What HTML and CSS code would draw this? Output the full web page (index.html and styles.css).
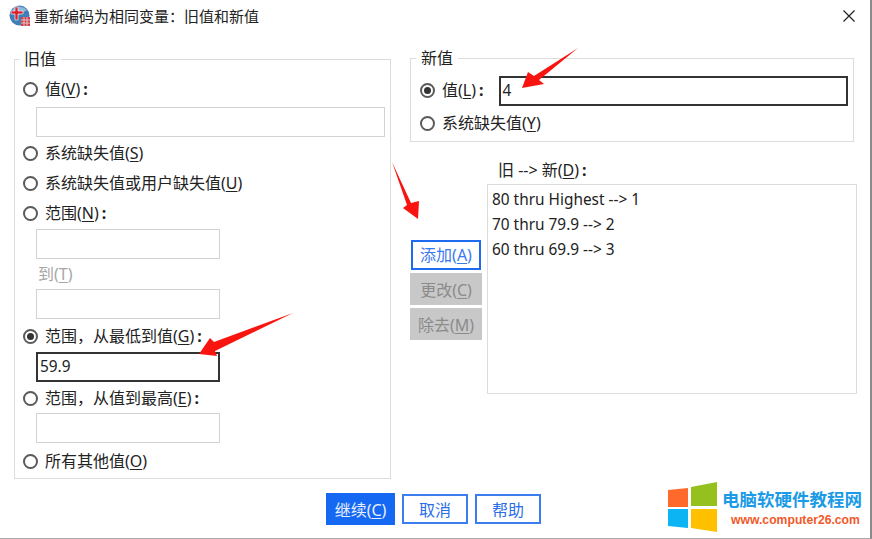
FILE: index.html
```html
<!DOCTYPE html>
<html lang="zh">
<head>
<meta charset="utf-8">
<title>重新编码为相同变量：旧值和新值</title>
<link rel="stylesheet" href="styles.css">
</head>
<body>
<div class="dialog">
  <header class="titlebar">
    <svg class="app-icon" width="22" height="22" viewBox="0 0 22 22">
      <circle cx="10.5" cy="10.5" r="10" fill="#3f7fb8"/>
      <path d="M4 4 A10 10 0 0 1 18 5 L10 10 L3 9 Z" fill="#8fb8d8"/>
      <path d="M6 2h3v4h5v3H9v6H6V9H2V6h4z" fill="#d9232e" stroke="#fff" stroke-width=".6"/>
      <rect x="12" y="12" width="9" height="9" fill="#c8434c"/>
      <path d="M12 15h9M12 18h9M15 12v9M18 12v9" stroke="#f3d7d9" stroke-width=".8"/>
    </svg>
    <span class="title">重新编码为相同变量：旧值和新值</span>
    <svg class="close" width="14" height="14" viewBox="0 0 14 14"><path d="M1.5 1.5l11 11M12.5 1.5l-11 11" stroke="#222" stroke-width="1.2" fill="none"/></svg>
  </header>

  <main class="content">
    <fieldset class="group old">
      <legend>旧值</legend>
      <div class="opt"><i class="radio"></i><span>值(<u>V</u>)<b class="c">:</b></span></div>
      <div class="field wide"></div>
      <div class="opt opt-a"><i class="radio"></i><span>系统缺失值(<u>S</u>)</span></div>
      <div class="opt opt-b"><i class="radio"></i><span>系统缺失值或用户缺失值(<u>U</u>)</span></div>
      <div class="opt opt-b"><i class="radio"></i><span>范围(<u>N</u>)<b class="c">:</b></span></div>
      <div class="field narrow"></div>
      <div class="to">到(<u>T</u>)</div>
      <div class="field narrow after-to"></div>
      <div class="opt opt-c"><i class="radio on"></i><span>范围，从最低到值(<u>G</u>)<b class="c">:</b></span></div>
      <div class="field narrow active">59.9</div>
      <div class="opt opt-d"><i class="radio"></i><span>范围，从值到最高(<u>E</u>)<b class="c">:</b></span></div>
      <div class="field narrow tight"></div>
      <div class="opt opt-e"><i class="radio"></i><span>所有其他值(<u>O</u>)</span></div>
    </fieldset>

    <div class="right">
      <fieldset class="group new">
        <legend>新值</legend>
        <div class="new-row">
          <div class="opt opt-l"><i class="radio on"></i><span>值(<u>L</u>)<b class="c">:</b></span></div>
          <div class="field grow active">4</div>
        </div>
        <div class="opt opt-y"><i class="radio"></i><span>系统缺失值(<u>Y</u>)</span></div>
      </fieldset>
      <div class="mapping">
        <div class="actions">
          <button class="btn add">添加(<u>A</u>)</button>
          <button class="btn off">更改(<u>C</u>)</button>
          <button class="btn off">除去(<u>M</u>)</button>
        </div>
        <div class="list-wrap">
          <div class="list-label">旧 --&gt; 新(<u>D</u>)<b class="c">:</b></div>
          <div class="list">
            <div>80 thru Highest --&gt; 1</div>
            <div>70 thru 79.9 --&gt; 2</div>
            <div>60 thru 69.9 --&gt; 3</div>
          </div>
        </div>
      </div>
    </div>
  </main>

  <footer class="footer">
    <button class="btn primary">继续(<u>C</u>)</button>
    <button class="btn plain">取消</button>
    <button class="btn plain">帮助</button>
  </footer>

  <svg class="arrows" width="872" height="539" viewBox="0 0 872 539">
    <polygon fill="#f8150f" points="522,88 528,72 534,76 578,48 539,80 544,84"/>
    <polygon fill="#f8150f" points="392,162 411,203 419,201 418,219 403,208 407,205"/>
    <polygon fill="#f8150f" points="293,313 214,342 210,338 199,354 217,356 215,351"/>
  </svg>

  <div class="watermark">
    <svg class="win" width="50" height="51" viewBox="0 0 50 51">
      <polygon fill="#ff6a2c" points="0,8 20,6 20,25 0,25"/>
      <polygon fill="#95c11f" points="23,5 49,0 49,24 23,24"/>
      <polygon fill="#0db4f3" points="0,27 20,27 20,46 0,44"/>
      <polygon fill="#ffc000" points="23,27 49,27 49,50 23,46"/>
    </svg>
    <div class="wm-text">
      <div class="wm-cn">电脑软硬件教程网</div>
      <div class="wm-url">www.computer26.com</div>
    </div>
  </div>
</div>
</body>
</html>
```
FILE: styles.css
```css
* { box-sizing: border-box; }
html, body { margin: 0; padding: 0; background: #fff; }
body {
  font-family: "Noto Sans", "Noto Sans CJK SC", sans-serif;
  font-size: 16px;
  color: #222;
  width: 872px;
  height: 539px;
  overflow: hidden;
}
u { text-underline-offset: 2px; }
.c { font-weight: 700; margin-left: 3px; }

.dialog {
  position: relative;
  width: 872px;
  height: 539px;
  display: flex;
  flex-direction: column;
  border-right: 2px solid #8a8a8a;
  border-bottom: 1px solid #a8a8a8;
}

.titlebar {
  height: 32px;
  padding: 0 15px 0 9px;
  display: flex;
  align-items: center;
  flex: none;
}
.app-icon { flex: none; margin-right: 3px; }
.title { font-size: 15px; line-height: 20px; color: #222; font-family: "Noto Sans CJK SC", sans-serif; }
.close { margin-left: auto; margin-right: -1px; }

.content {
  display: flex;
  padding: 17px 0 0 14px;
  flex: none;
  height: 448px;
}

.group {
  margin: 0;
  padding: 0;
  min-width: 0;
  border: 1px solid #dcdcdc;
}
.group legend {
  margin-left: -4px;
  padding: 0 5px;
  font-size: 16px;
  line-height: 20px;
  height: 20px;
}
.old { width: 377px; height: 430px; padding: 0 0 0 8px; }
.old > .opt:first-of-type { margin-top: 9px; }
.new { width: 444px; height: 94px; padding: 0 0 0 9px; }

.right { margin-top: -1px; margin-left: 19px; width: 447px; display: flex; flex-direction: column; }

.opt { display: flex; align-items: center; height: 22px; line-height: 22px; white-space: nowrap; }
.opt span { margin-left: 7px; }
.opt-a { margin-top: 5px; }
.opt-b { margin-top: 8px; }
.opt-c { margin-top: 6px; }
.opt-d { margin-top: 5px; }
.opt-e { margin-top: 7px; }
.opt-l { margin-bottom: 2px; }
.opt-y { margin-top: 6px; }

.radio {
  flex: none;
  width: 15px;
  height: 15px;
  border: 2px solid #5a5a5a;
  border-radius: 50%;
  display: flex;
  align-items: center;
  justify-content: center;
  background: #fff;
}
.radio.on::before {
  content: "";
  width: 7px;
  height: 7px;
  border-radius: 50%;
  background: #333;
}

.field {
  height: 30px;
  border: 1px solid #d2d2d2;
  background: #fff;
  line-height: 28px;
  padding-left: 2px;
  font-size: 15.4px;
}
.field.wide { width: 349px; margin: 7px 0 0 13px; }
.field.narrow { width: 184px; margin: 5px 0 0 13px; }
.field.after-to { margin-top: 4px; }
.field.tight { margin-top: 4px; }
.field.active { border: 2px solid #333; line-height: 26px; padding-left: 2px; }
.field.grow { width: 349px; margin: 0 0 0 15px; }
.new-row { display: flex; align-items: center; margin-top: 8px; }

.to { margin: 4px 0 0 15px; height: 22px; line-height: 22px; color: #a6a6a6; font-size: 16px; }

.mapping { display: flex; align-items: flex-start; margin-top: 16px; }
.actions { width: 77px; flex: none; margin-top: 82px; display: flex; flex-direction: column; align-items: flex-start; }
.list-wrap { width: 370px; }
.list-label { margin-left: 11px; height: 26px; line-height: 24px; font-size: 16px; }
.list {
  height: 210px;
  border: 1px solid #dcdcdc;
  padding: 2px 0 0 4px;
  font-size: 15.4px;
  line-height: 25px;
}

.btn {
  display: block;
  font-family: inherit;
  font-size: 16px;
  padding: 0;
  margin: 0;
  text-align: center;
  border-radius: 0;
  background: #fff;
}
.add { width: 70px; height: 30px; margin-left: 1px; border: 2px solid #1f6bf0; color: #3a78ee; line-height: 24px; }
.off { width: 72px; height: 32px; margin-top: 3px; border: none; background: #c8c8c8; color: #8b8b8b; }

.footer {
  flex: none;
  padding: 12px 0 0 326px;
  display: flex;
  align-items: center;
  gap: 7px;
  height: 46px;
}
.primary { width: 69px; height: 32px; border: none; background: #1568f2; color: #e8f0ff; }
.plain { width: 66px; height: 30px; border: 2px solid #3c7df0; color: #2a6ee8; }

.arrows { position: absolute; left: 0; top: 0; pointer-events: none; }

.watermark {
  position: absolute;
  left: 668px;
  top: 482px;
  display: flex;
  align-items: flex-start;
}
.win { flex: none; }
.wm-text { margin-left: 4px; padding-top: 7px; }
.wm-cn {
  font-family: "Noto Sans CJK SC", sans-serif;
  font-weight: 700;
  font-size: 17.5px;
  line-height: 20px;
  color: #1b9be6;
  white-space: nowrap;
}
.wm-url {
  margin: 3px 0 0 9px;
  font-family: "Liberation Sans", sans-serif;
  font-weight: 700;
  font-size: 12.2px;
  line-height: 16px;
  color: #f1592a;
  white-space: nowrap;
}
```
